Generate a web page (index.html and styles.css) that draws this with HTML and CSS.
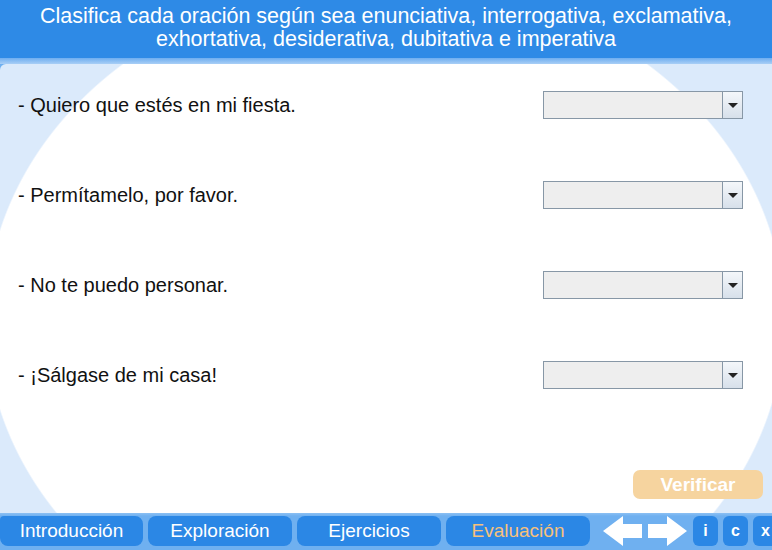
FILE: index.html
```html
<!DOCTYPE html>
<html lang="es">
<head>
<meta charset="utf-8">
<title>Clasifica cada oración</title>
<link rel="stylesheet" href="styles.css">
</head>
<body>
<div class="app">
  <header class="title">
    <p>Clasifica cada oración según sea enunciativa, interrogativa, exclamativa,<br>exhortativa, desiderativa, dubitativa e imperativa</p>
  </header>
  <div class="strip"></div>
  <main class="stage">
    <div class="rows">
      <div class="row">
        <span class="sentence">- Quiero que estés en mi fiesta.</span>
        <div class="select"><span class="select-field"></span><span class="select-btn"><span class="tri"></span></span></div>
      </div>
      <div class="row">
        <span class="sentence">- Permítamelo, por favor.</span>
        <div class="select"><span class="select-field"></span><span class="select-btn"><span class="tri"></span></span></div>
      </div>
      <div class="row">
        <span class="sentence">- No te puedo personar.</span>
        <div class="select"><span class="select-field"></span><span class="select-btn"><span class="tri"></span></span></div>
      </div>
      <div class="row">
        <span class="sentence">- ¡Sálgase de mi casa!</span>
        <div class="select"><span class="select-field"></span><span class="select-btn"><span class="tri"></span></span></div>
      </div>
    </div>
    <div class="actions">
      <button class="verify">Verificar</button>
    </div>
  </main>
  <nav class="nav">
    <button class="tab">Introducción</button>
    <button class="tab">Exploración</button>
    <button class="tab">Ejercicios</button>
    <button class="tab tab-active">Evaluación</button>
    <div class="arrows">
      <svg width="40" height="30" viewBox="0 0 40 30"><path d="M0 15 L20 0 L20 8 L39 8 L39 22 L20 22 L20 30 Z" fill="#fff"/></svg>
      <svg width="40" height="30" viewBox="0 0 40 30"><path d="M40 15 L20 0 L20 8 L1 8 L1 22 L20 22 L20 30 Z" fill="#fff"/></svg>
    </div>
    <button class="mini">i</button>
    <button class="mini">c</button>
    <button class="mini">x</button>
  </nav>
</div>
</body>
</html>
```
FILE: styles.css
```css
html, body {
  margin: 0;
  padding: 0;
}
body {
  width: 772px;
  height: 550px;
  overflow: hidden;
  font-family: "Liberation Sans", Arial, sans-serif;
  background: #6fb0f0;
}
.app {
  display: flex;
  flex-direction: column;
  height: 550px;
}
.title {
  height: 58px;
  background: #2e8ae6;
  color: #fff;
  display: flex;
  align-items: center;
  justify-content: center;
  text-align: center;
}
.title p {
  margin: 0;
  font-size: 21.5px;
  line-height: 23px;
  padding-bottom: 3px;
  white-space: nowrap;
}
.strip {
  height: 6px;
  background: linear-gradient(#6eaef0, #a9cff6);
}
.stage {
  flex: 1;
  display: flex;
  flex-direction: column;
  background:
    radial-gradient(ellipse 400px 340px at 385px 256px, #ffffff 99.6%, #dbeafb 100%);
  border-top-left-radius: 6px;
  overflow: hidden;
}
.rows {
  display: flex;
  flex-direction: column;
  gap: 62px;
  padding: 27px 29px 0 18px;
}
.row {
  height: 28px;
  display: flex;
  align-items: center;
  justify-content: space-between;
}
.sentence {
  font-size: 20px;
  color: #111;
  padding-top: 1px;
}
.select {
  width: 200px;
  height: 28px;
  box-sizing: border-box;
  border: 1px solid #8797a6;
  display: flex;
  background: #eeeeee;
}
.select-field {
  flex: 1;
}
.select-btn {
  width: 19px;
  border-left: 1px solid #8797a6;
  background: linear-gradient(#f4f7fa, #d7e0ea);
  display: flex;
  align-items: center;
  justify-content: center;
}
.tri {
  width: 0;
  height: 0;
  border-left: 5px solid transparent;
  border-right: 5px solid transparent;
  border-top: 5px solid #222;
}
.actions {
  margin-top: auto;
  display: flex;
  justify-content: flex-end;
  padding: 0 9px 14px 0;
}
.verify {
  width: 130px;
  height: 29px;
  border: none;
  border-radius: 7px;
  background: #f6d49f;
  color: #fff;
  font-family: "Liberation Sans", Arial, sans-serif;
  font-weight: bold;
  font-size: 19px;
  padding: 0;
}
.nav {
  height: 37px;
  box-sizing: border-box;
  padding-top: 3px;
  display: flex;
  gap: 5px;
  overflow: hidden;
  background: linear-gradient(#8cc0f3 0, #6fb0f0 3px);
}
.nav > * {
  flex-shrink: 0;
}
.tab {
  width: 144px;
  height: 30px;
  border: none;
  border-radius: 8px;
  background: #2b87e5;
  color: #fff;
  font-family: "Liberation Sans", Arial, sans-serif;
  font-size: 19px;
  padding: 0;
}
.tab:first-child {
  width: 143px;
  border-top-left-radius: 4px;
}
.tab-active {
  color: #f7c17b;
}
.arrows {
  display: flex;
  gap: 4px;
  margin-left: 8px;
  margin-right: 1px;
}
.mini {
  width: 25px;
  height: 30px;
  border: none;
  border-radius: 6px;
  background: #2b87e5;
  color: #fff;
  font-family: "Liberation Sans", Arial, sans-serif;
  font-weight: bold;
  font-size: 16px;
  padding: 0;
}
```
